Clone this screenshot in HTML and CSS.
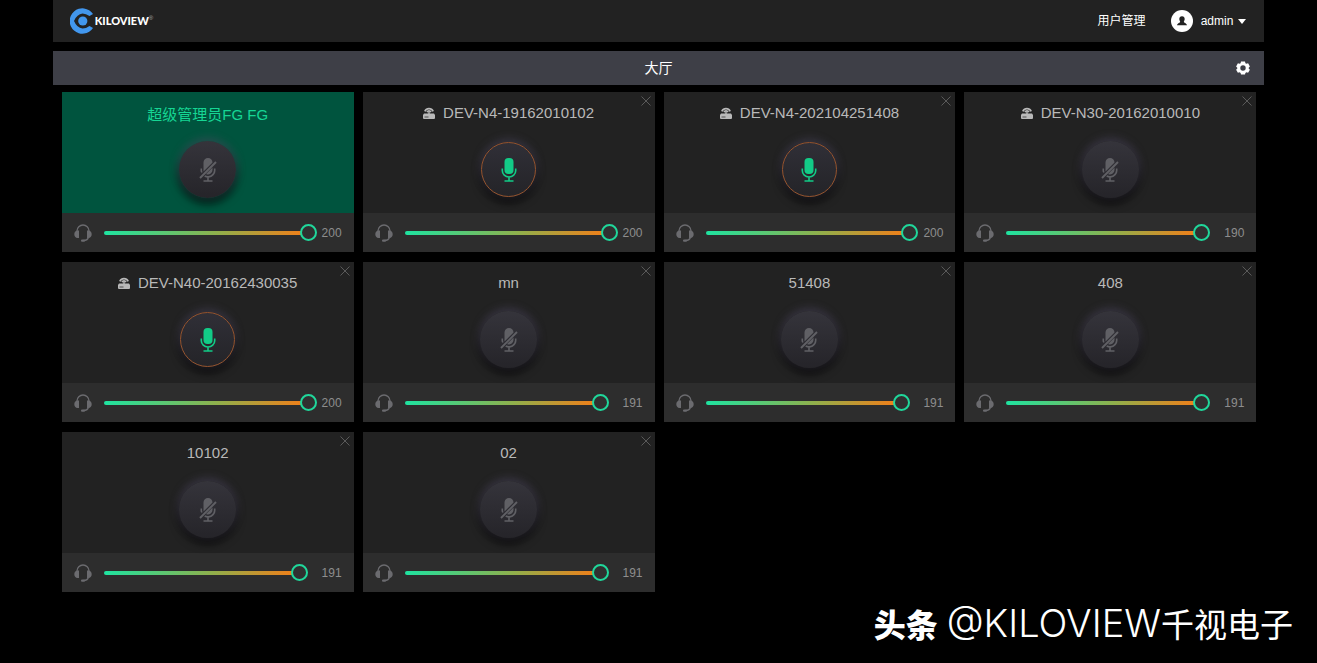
FILE: index.html
```html
<!DOCTYPE html>
<html lang="zh-CN">
<head>
<meta charset="utf-8">
<meta name="viewport" content="width=device-width, initial-scale=1">
<title>KILOVIEW</title>
<link rel="stylesheet" href="styles.css">
</head>
<body>
<svg class="sprite" aria-hidden="true">
  <symbol id="mic" viewBox="0 0 16 24">
    <rect x="3.5" y="0" width="9" height="16" rx="4"/>
    <path d="M1.3 10.5v2.3a6.7 6.2 0 0 0 13.4 0v-2.3M8 19v4M3.5 23h9" fill="none" stroke="currentColor" stroke-width="1.6"/>
  </symbol>
  <symbol id="mic-off" viewBox="0 0 18 24">
    <path d="M4.500 4.500a4.500 4.500 0 0 1 9 0L4.500 13.500zM13.500 9.500v2.500a4.500 4.500 0 0 1-6.500 4z"/>
    <path d="M2.300 10.500v2.500l.6 1.500M15.700 10.500v2a6.700 6.500 0 0 1-10 5.500M9 19.500v3M4.500 23h9" fill="none" stroke="currentColor" stroke-width="1.600"/>
    <path d="M1 20L17 4" fill="none" stroke="currentColor" stroke-width="1.900"/>
  </symbol>
  <symbol id="headset" viewBox="0 0 18 18">
    <path d="M3 8V7a6 6 0 0 1 12 0v1M14.500 13c-.5 2.500-2 3.500-5 3.500" fill="none" stroke="currentColor" stroke-width="1.300"/>
    <path d="M5 6.500v7.500H3.500C1.500 14 .3 12.300.3 10.300S1.500 6.500 3.500 6.500zM13 6.500v7.500h1.500c2 0 3.200-1.700 3.200-3.700S16.500 6.500 14.500 6.500z"/>
    <rect x="7" y="15.500" width="4" height="2.200" rx="1"/>
  </symbol>
  <symbol id="device" viewBox="0 0 12 12">
    <path d="M1.800 4.300a4.700 4.700 0 0 1 8.400 0M4 5a2.300 2.300 0 0 1 4 0" fill="none" stroke="currentColor" stroke-width="1.700"/>
    <path d="M5.300 4.500h1.400V6.500H11l1 1.500V11q0 1-1 1H1q-1 0-1-1V8L1 6.500h4.300z"/>
    <path d="M1.500 10h4" stroke="#222" stroke-width=".7"/>
  </symbol>
  <symbol id="close" viewBox="0 0 10 10">
    <path d="M.5.5l9 9M9.500.5l-9 9" fill="none" stroke="currentColor"/>
  </symbol>
</svg>

<div class="page">
  <header class="topbar">
    <a class="brand" href="#" aria-label="KILOVIEW">
      <svg class="brand-mark" viewBox="0 0 24 26" aria-hidden="true">
        <path d="M23 6A12.700 12.700 0 1 0 23 20L19.500 18Q16 20.500 12.500 20.500Q7 20 4 13Q7 6 12.500 5.500Q16 5.500 19.500 8Z" fill="#4297ee"/>
        <circle cx="12.800" cy="13" r="4.600" fill="#4297ee"/>
      </svg>
      <span class="brand-name">KILOVIEW</span><span class="brand-reg">®</span>
    </a>
    <nav class="account">
      <a class="link" href="#">用户管理</a>
      <button class="user" type="button">
        <svg class="avatar" viewBox="0 0 22 22" aria-hidden="true">
          <circle cx="11" cy="11" r="11" fill="#fff"/>
          <path d="M11 6.300c-1.800 0-2.700 1.200-2.700 2.700 0 1.300.6 2 .9 2.700 0 1-2.700 1.300-3.200 3.500h10c-.5-2.200-3.200-2.500-3.200-3.500.3-.7.9-1.400.9-2.700 0-1.500-.9-2.700-2.700-2.700z" fill="#222"/>
        </svg>
        <span>admin</span>
        <svg class="caret" viewBox="0 0 8 5" aria-hidden="true"><path d="M0 0h8L4 5z"/></svg>
      </button>
    </nav>
  </header>

  <div class="roombar">
    <h1 class="room-name">大厅</h1>
    <button class="settings" type="button" aria-label="设置">
      <svg viewBox="0 0 14 14" aria-hidden="true">
        <path fill-rule="evenodd" d="M5 .5h4l.4 1.700 1 .6 1.700-.5 1.800 3.200L12.700 6.700v.8l1.200 1.200-1.800 3.100-1.700-.5-1 .6L9 13.500H5l-.4-1.600-1-.6-1.700.5L.1 8.700l1.200-1.200v-.8L.1 5.500l1.800-3.200 1.700.5 1-.6zM7 4.300a2.700 2.700 0 1 0 0 5.400 2.700 2.700 0 0 0 0-5.400z"/>
      </svg>
    </button>
  </div>

  <main class="grid">
    <section class="card self">
      <div class="stage"><h2 class="title">超级管理员FG FG</h2><button class="mic" type="button" aria-label="麦克风"><svg class="i-off"><use href="#mic-off"/></svg></button></div>
      <div class="volume"><svg class="headset"><use href="#headset"/></svg><input id="v1" type="range" max="200" value="200" style="--fill:100%" aria-label="音量"><output for="v1">200</output></div>
    </section>
    <section class="card">
      <button class="close" type="button" aria-label="关闭"><svg><use href="#close"/></svg></button>
      <div class="stage"><h2 class="title"><svg class="device"><use href="#device"/></svg>DEV-N4-19162010102</h2><button class="mic on" type="button" aria-label="麦克风"><svg class="i-on"><use href="#mic"/></svg></button></div>
      <div class="volume"><svg class="headset"><use href="#headset"/></svg><input id="v2" type="range" max="200" value="200" style="--fill:100%" aria-label="音量"><output for="v2">200</output></div>
    </section>
    <section class="card">
      <button class="close" type="button" aria-label="关闭"><svg><use href="#close"/></svg></button>
      <div class="stage"><h2 class="title"><svg class="device"><use href="#device"/></svg>DEV-N4-202104251408</h2><button class="mic on" type="button" aria-label="麦克风"><svg class="i-on"><use href="#mic"/></svg></button></div>
      <div class="volume"><svg class="headset"><use href="#headset"/></svg><input id="v3" type="range" max="200" value="200" style="--fill:100%" aria-label="音量"><output for="v3">200</output></div>
    </section>
    <section class="card">
      <button class="close" type="button" aria-label="关闭"><svg><use href="#close"/></svg></button>
      <div class="stage"><h2 class="title"><svg class="device"><use href="#device"/></svg>DEV-N30-20162010010</h2><button class="mic" type="button" aria-label="麦克风"><svg class="i-off"><use href="#mic-off"/></svg></button></div>
      <div class="volume"><svg class="headset"><use href="#headset"/></svg><input id="v4" type="range" max="200" value="190" style="--fill:95%" aria-label="音量"><output for="v4">190</output></div>
    </section>
    <section class="card">
      <button class="close" type="button" aria-label="关闭"><svg><use href="#close"/></svg></button>
      <div class="stage"><h2 class="title"><svg class="device"><use href="#device"/></svg>DEV-N40-20162430035</h2><button class="mic on" type="button" aria-label="麦克风"><svg class="i-on"><use href="#mic"/></svg></button></div>
      <div class="volume"><svg class="headset"><use href="#headset"/></svg><input id="v5" type="range" max="200" value="200" style="--fill:100%" aria-label="音量"><output for="v5">200</output></div>
    </section>
    <section class="card">
      <button class="close" type="button" aria-label="关闭"><svg><use href="#close"/></svg></button>
      <div class="stage"><h2 class="title">mn</h2><button class="mic" type="button" aria-label="麦克风"><svg class="i-off"><use href="#mic-off"/></svg></button></div>
      <div class="volume"><svg class="headset"><use href="#headset"/></svg><input id="v6" type="range" max="200" value="191" style="--fill:95.5%" aria-label="音量"><output for="v6">191</output></div>
    </section>
    <section class="card">
      <button class="close" type="button" aria-label="关闭"><svg><use href="#close"/></svg></button>
      <div class="stage"><h2 class="title">51408</h2><button class="mic" type="button" aria-label="麦克风"><svg class="i-off"><use href="#mic-off"/></svg></button></div>
      <div class="volume"><svg class="headset"><use href="#headset"/></svg><input id="v7" type="range" max="200" value="191" style="--fill:95.5%" aria-label="音量"><output for="v7">191</output></div>
    </section>
    <section class="card">
      <button class="close" type="button" aria-label="关闭"><svg><use href="#close"/></svg></button>
      <div class="stage"><h2 class="title">408</h2><button class="mic" type="button" aria-label="麦克风"><svg class="i-off"><use href="#mic-off"/></svg></button></div>
      <div class="volume"><svg class="headset"><use href="#headset"/></svg><input id="v8" type="range" max="200" value="191" style="--fill:95.5%" aria-label="音量"><output for="v8">191</output></div>
    </section>
    <section class="card">
      <button class="close" type="button" aria-label="关闭"><svg><use href="#close"/></svg></button>
      <div class="stage"><h2 class="title">10102</h2><button class="mic" type="button" aria-label="麦克风"><svg class="i-off"><use href="#mic-off"/></svg></button></div>
      <div class="volume"><svg class="headset"><use href="#headset"/></svg><input id="v9" type="range" max="200" value="191" style="--fill:95.5%" aria-label="音量"><output for="v9">191</output></div>
    </section>
    <section class="card">
      <button class="close" type="button" aria-label="关闭"><svg><use href="#close"/></svg></button>
      <div class="stage"><h2 class="title">02</h2><button class="mic" type="button" aria-label="麦克风"><svg class="i-off"><use href="#mic-off"/></svg></button></div>
      <div class="volume"><svg class="headset"><use href="#headset"/></svg><input id="v10" type="range" max="200" value="191" style="--fill:95.5%" aria-label="音量"><output for="v10">191</output></div>
    </section>
  </main>
</div>

<p class="watermark"><strong>头条</strong><span><span class="handle">@KILOVIEW</span>千视电子</span></p>
</body>
</html>
```

FILE: styles.css
```css
* { box-sizing: border-box; }

body {
  margin: 0;
  background: #000;
  color: #fff;
  font: 12px/16px "Liberation Sans", "Noto Sans CJK SC", sans-serif;
}

button {
  padding: 0;
  border: 0;
  background: none;
  color: inherit;
  font: inherit;
  cursor: pointer;
}

a { color: inherit; text-decoration: none; }
svg { display: block; fill: currentColor; }
.sprite { position: absolute; width: 0; height: 0; }

.page {
  width: 92%;
  margin: 0 auto;
}

.topbar {
  display: flex;
  align-items: center;
  justify-content: space-between;
  height: 42px;
  padding: 0 18px 0 17px;
  background: #222;
}

.brand { display: flex; align-items: center; }
.brand-mark { width: 24px; height: 26px; margin-right: 1px; }
.brand-name { font: 900 11px/16px Lato, sans-serif; }
.brand-reg { font-size: 6px; line-height: 8px; align-self: flex-start; margin-top: 6px; color: #aaa; }

.account { display: flex; align-items: center; gap: 25px; }
.user { display: flex; align-items: center; }
.avatar { width: 22px; height: 22px; margin-right: 8px; }
.caret { width: 8px; height: 5px; margin-left: 5px; }

.roombar {
  display: flex;
  align-items: center;
  height: 34px;
  margin-top: 9px;
  padding-right: 14px;
  background: #3e3f47;
}
.room-name {
  flex: 1;
  margin: 0;
  padding-left: 28px;
  text-align: center;
  font-size: 14px;
  font-weight: 400;
  line-height: 20px;
}
.settings svg { width: 14px; height: 14px; }

.grid {
  display: grid;
  grid-template-columns: repeat(4, minmax(0, 1fr));
  gap: 10px 9px;
  padding: 7px 8px 24px 9px;
}

.card { position: relative; background: #222; }

.stage {
  display: flex;
  flex-direction: column;
  align-items: center;
  gap: 18px;
  padding: 11px 24px 15px;
}

.title {
  display: flex;
  align-items: center;
  gap: 8px;
  margin: 0;
  color: #b9b9b9;
  font-size: 15px;
  font-weight: 400;
  line-height: 20px;
  white-space: nowrap;
}
.device { width: 12px; height: 12px; }

.self .stage { gap: 16px; padding-top: 13px; background: #00543e; }
.self .title { color: #16d694; }

.mic {
  display: grid;
  place-items: center;
  width: 57px;
  height: 57px;
  border-radius: 50%;
  background: linear-gradient(#35343b, #252429);
  color: #606065;
  box-shadow: 0 -2px 8px 1px rgba(86, 80, 108, .45), 0 5px 9px 1px rgba(0, 0, 0, .65);
}
.mic.on {
  width: 55px;
  height: 55px;
  margin: 1px;
  border: 1px solid #95542f;
  background: linear-gradient(#302f37, #242428);
  color: #12cc87;
}
.i-on { width: 16px; height: 24px; }
.i-off { width: 18px; height: 24px; }

.close {
  position: absolute;
  top: 4px;
  right: 4px;
  color: #5a5a5a;
}
.close svg { width: 10px; height: 10px; }

.volume {
  display: flex;
  align-items: center;
  height: 39px;
  padding: 0 12px;
  background: #2d2d2d;
}
.headset { width: 18px; height: 18px; margin-right: 12px; color: #6b6b6f; }

.volume input {
  flex: 1;
  min-width: 0;
  height: 18px;
  margin: 0;
  appearance: none;
  background: none;
}
.volume input::-webkit-slider-runnable-track {
  height: 4px;
  border-radius: 2px;
  background: linear-gradient(90deg, #1fe3a0, #8fb04c 55%, #f67c16) 0 0 / calc(var(--fill) - 8px) 100% no-repeat;
}
.volume input::-webkit-slider-thumb {
  appearance: none;
  width: 17px;
  height: 17px;
  margin-top: -7px;
  border: 2px solid #20d79b;
  border-radius: 50%;
  background: #303030;
}
.volume output { width: 25px; color: #8e8e8e; text-align: right; }

.watermark {
  position: absolute;
  right: 24px;
  bottom: 16px;
  display: flex;
  align-items: center;
  gap: 9px;
  margin: 0;
  font: 400 33px/48px "Noto Sans CJK SC", sans-serif;
}
.watermark strong { font-size: 32px; font-weight: 900; }
.handle { font: 300 38px/48px Inter, sans-serif; }
```
